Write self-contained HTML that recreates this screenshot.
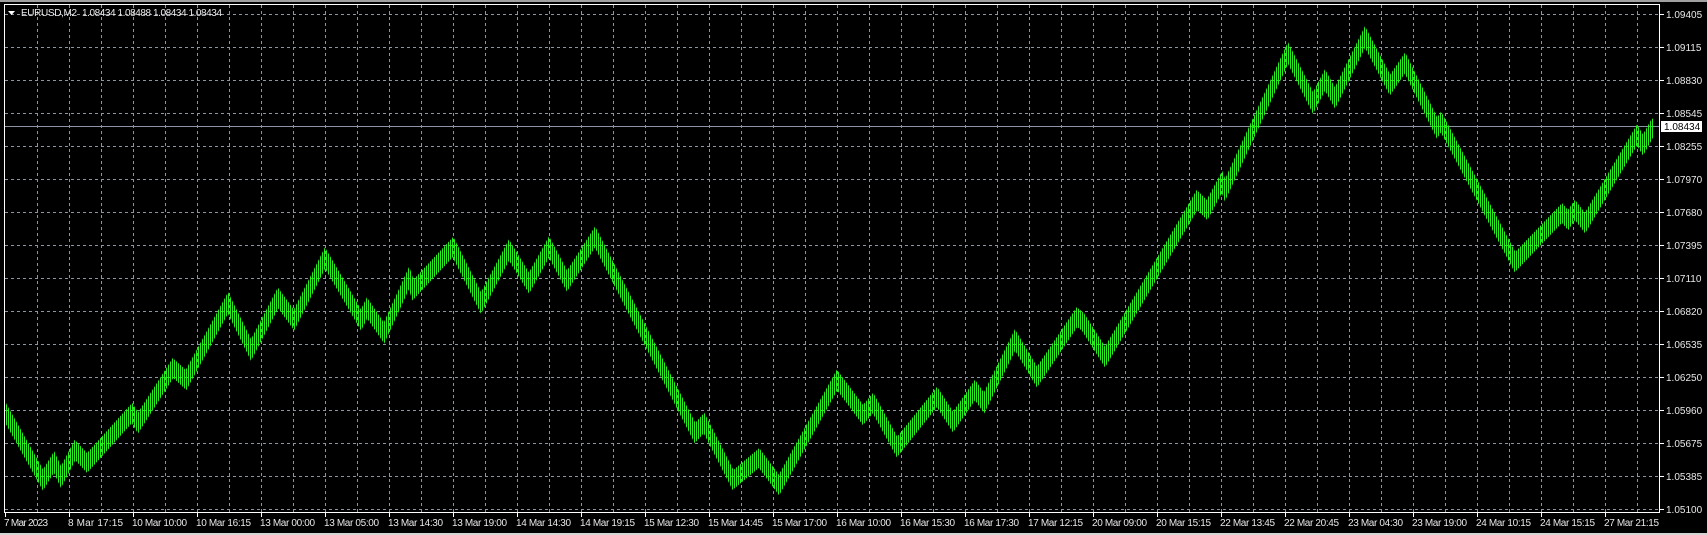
<!DOCTYPE html>
<html><head><meta charset="utf-8"><style>
html,body{margin:0;padding:0;background:#000;width:1707px;height:535px;overflow:hidden}
svg{display:block}
text{font-family:"Liberation Sans",sans-serif;font-size:10px;fill:#e8e8e8}
</style></head><body>
<svg width="1707" height="535" viewBox="0 0 1707 535" xmlns="http://www.w3.org/2000/svg">
<defs>
<pattern id="st" patternUnits="userSpaceOnUse" x="0" y="0" width="2" height="10"><rect x="0" y="0" width="1" height="10" fill="#28f020"/></pattern>
<polyline id="pl" fill="none" stroke="url(#st)" stroke-width="2.6" stroke-linejoin="miter" points="5,412 43,480 54,462 61,477 75,450 87,463 132,413 138,423 173,368 186,380 228,303 251,350 278,298 294,320 325,258 361,320 367,308 384,333 409,278 413,290 453,247 481,303 509,250 529,283 549,247 567,281 595,237 695,433 704,423 733,480 759,458 779,485 837,380 863,415 873,403 897,447 937,397 953,422 975,390 984,403 1015,340 1037,377 1077,317 1083,322 1105,357 1153,275 1197,200 1207,210 1222,182 1225,190 1288,53 1313,103 1325,80 1335,98 1365,37 1390,85 1405,63 1437,128 1441,122 1515,262 1562,213 1568,220 1575,210 1585,223 1637,135 1643,145 1653,127"/>
</defs>
<rect x="0" y="0" width="1707" height="535" fill="#000"/>
<rect x="0" y="0" width="1707" height="2" fill="#a0a0a0"/>
<rect x="0" y="533" width="1707" height="2" fill="#d4d4d4"/>
<g stroke="#8a96a6" stroke-width="1" stroke-dasharray="3,3" fill="none">
<path d="M37.5 5V512M69.5 5V512M101.5 5V512M133.5 5V512M165.5 5V512M197.5 5V512M229.5 5V512M261.5 5V512M293.5 5V512M325.5 5V512M357.5 5V512M389.5 5V512M421.5 5V512M453.5 5V512M485.5 5V512M517.5 5V512M549.5 5V512M581.5 5V512M613.5 5V512M645.5 5V512M677.5 5V512M709.5 5V512M741.5 5V512M773.5 5V512M805.5 5V512M837.5 5V512M869.5 5V512M901.5 5V512M933.5 5V512M965.5 5V512M997.5 5V512M1029.5 5V512M1061.5 5V512M1093.5 5V512M1125.5 5V512M1157.5 5V512M1189.5 5V512M1221.5 5V512M1253.5 5V512M1285.5 5V512M1317.5 5V512M1349.5 5V512M1381.5 5V512M1413.5 5V512M1445.5 5V512M1477.5 5V512M1509.5 5V512M1541.5 5V512M1573.5 5V512M1605.5 5V512M1637.5 5V512"/>
<path d="M5 14.5H1659M5 47.5H1659M5 80.5H1659M5 113.5H1659M5 146.5H1659M5 179.5H1659M5 212.5H1659M5 245.5H1659M5 278.5H1659M5 311.5H1659M5 344.5H1659M5 377.5H1659M5 410.5H1659M5 443.5H1659M5 476.5H1659M5 509.5H1659"/>
</g>
<line x1="5" y1="126.5" x2="1659" y2="126.5" stroke="#8a96a6" stroke-width="1"/>
<g>
<use href="#pl" transform="translate(0,-8)"/><use href="#pl" transform="translate(0,-6)"/><use href="#pl" transform="translate(0,-4)"/><use href="#pl" transform="translate(0,-2)"/><use href="#pl"/><use href="#pl" transform="translate(0,2)"/><use href="#pl" transform="translate(0,4)"/><use href="#pl" transform="translate(0,6)"/><use href="#pl" transform="translate(0,8)"/>
</g>
<rect x="4.5" y="4.5" width="1655" height="508" fill="none" stroke="#fff" stroke-width="1"/>
<g stroke="#fff" stroke-width="1">
<path d="M1660 14.5h4M1660 47.5h4M1660 80.5h4M1660 113.5h4M1660 146.5h4M1660 179.5h4M1660 212.5h4M1660 245.5h4M1660 278.5h4M1660 311.5h4M1660 344.5h4M1660 377.5h4M1660 410.5h4M1660 443.5h4M1660 476.5h4M1660 509.5h4"/>
<path d="M5.5 512v5M69.5 512v5M133.5 512v5M197.5 512v5M261.5 512v5M325.5 512v5M389.5 512v5M453.5 512v5M517.5 512v5M581.5 512v5M645.5 512v5M709.5 512v5M773.5 512v5M837.5 512v5M901.5 512v5M965.5 512v5M1029.5 512v5M1093.5 512v5M1157.5 512v5M1221.5 512v5M1285.5 512v5M1349.5 512v5M1413.5 512v5M1477.5 512v5M1541.5 512v5M1605.5 512v5"/>
</g>
<g>
<text x="1666" y="18">1.09405</text><text x="1666" y="51">1.09115</text><text x="1666" y="84">1.08830</text><text x="1666" y="117">1.08545</text><text x="1666" y="150">1.08255</text><text x="1666" y="183">1.07970</text><text x="1666" y="216">1.07680</text><text x="1666" y="249">1.07395</text><text x="1666" y="282">1.07110</text><text x="1666" y="315">1.06820</text><text x="1666" y="348">1.06535</text><text x="1666" y="381">1.06250</text><text x="1666" y="414">1.05960</text><text x="1666" y="447">1.05675</text><text x="1666" y="480">1.05385</text><text x="1666" y="513">1.05100</text>
</g>
<rect x="1661" y="121" width="41" height="11" fill="#fff"/>
<text x="1664" y="130" style="fill:#000">1.08434</text>
<g>
<text x="4" y="526" textLength="44">7 Mar 2023</text>
<text x="68" y="526" textLength="55">8 Mar 17:15</text>
<text x="132" y="526" textLength="55">10 Mar 10:00</text>
<text x="196" y="526" textLength="55">10 Mar 16:15</text>
<text x="260" y="526" textLength="55">13 Mar 00:00</text>
<text x="324" y="526" textLength="55">13 Mar 05:00</text>
<text x="388" y="526" textLength="55">13 Mar 14:30</text>
<text x="452" y="526" textLength="55">13 Mar 19:00</text>
<text x="516" y="526" textLength="55">14 Mar 14:30</text>
<text x="580" y="526" textLength="55">14 Mar 19:15</text>
<text x="644" y="526" textLength="55">15 Mar 12:30</text>
<text x="708" y="526" textLength="55">15 Mar 14:45</text>
<text x="772" y="526" textLength="55">15 Mar 17:00</text>
<text x="836" y="526" textLength="55">16 Mar 10:00</text>
<text x="900" y="526" textLength="55">16 Mar 15:30</text>
<text x="964" y="526" textLength="55">16 Mar 17:30</text>
<text x="1028" y="526" textLength="55">17 Mar 12:15</text>
<text x="1092" y="526" textLength="55">20 Mar 09:00</text>
<text x="1156" y="526" textLength="55">20 Mar 15:15</text>
<text x="1220" y="526" textLength="55">22 Mar 13:45</text>
<text x="1284" y="526" textLength="55">22 Mar 20:45</text>
<text x="1348" y="526" textLength="55">23 Mar 04:30</text>
<text x="1412" y="526" textLength="55">23 Mar 19:00</text>
<text x="1476" y="526" textLength="55">24 Mar 10:15</text>
<text x="1540" y="526" textLength="55">24 Mar 15:15</text>
<text x="1604" y="526" textLength="55">27 Mar 21:15</text>
</g>
<path d="M8 11h7l-3.5 4z" fill="#fff"/>
<text x="21" y="16" textLength="56">EURUSD,M2</text>
<text x="82" y="16" textLength="140">1.08434 1.08488 1.08434 1.08434</text>
</svg>
</body></html>
